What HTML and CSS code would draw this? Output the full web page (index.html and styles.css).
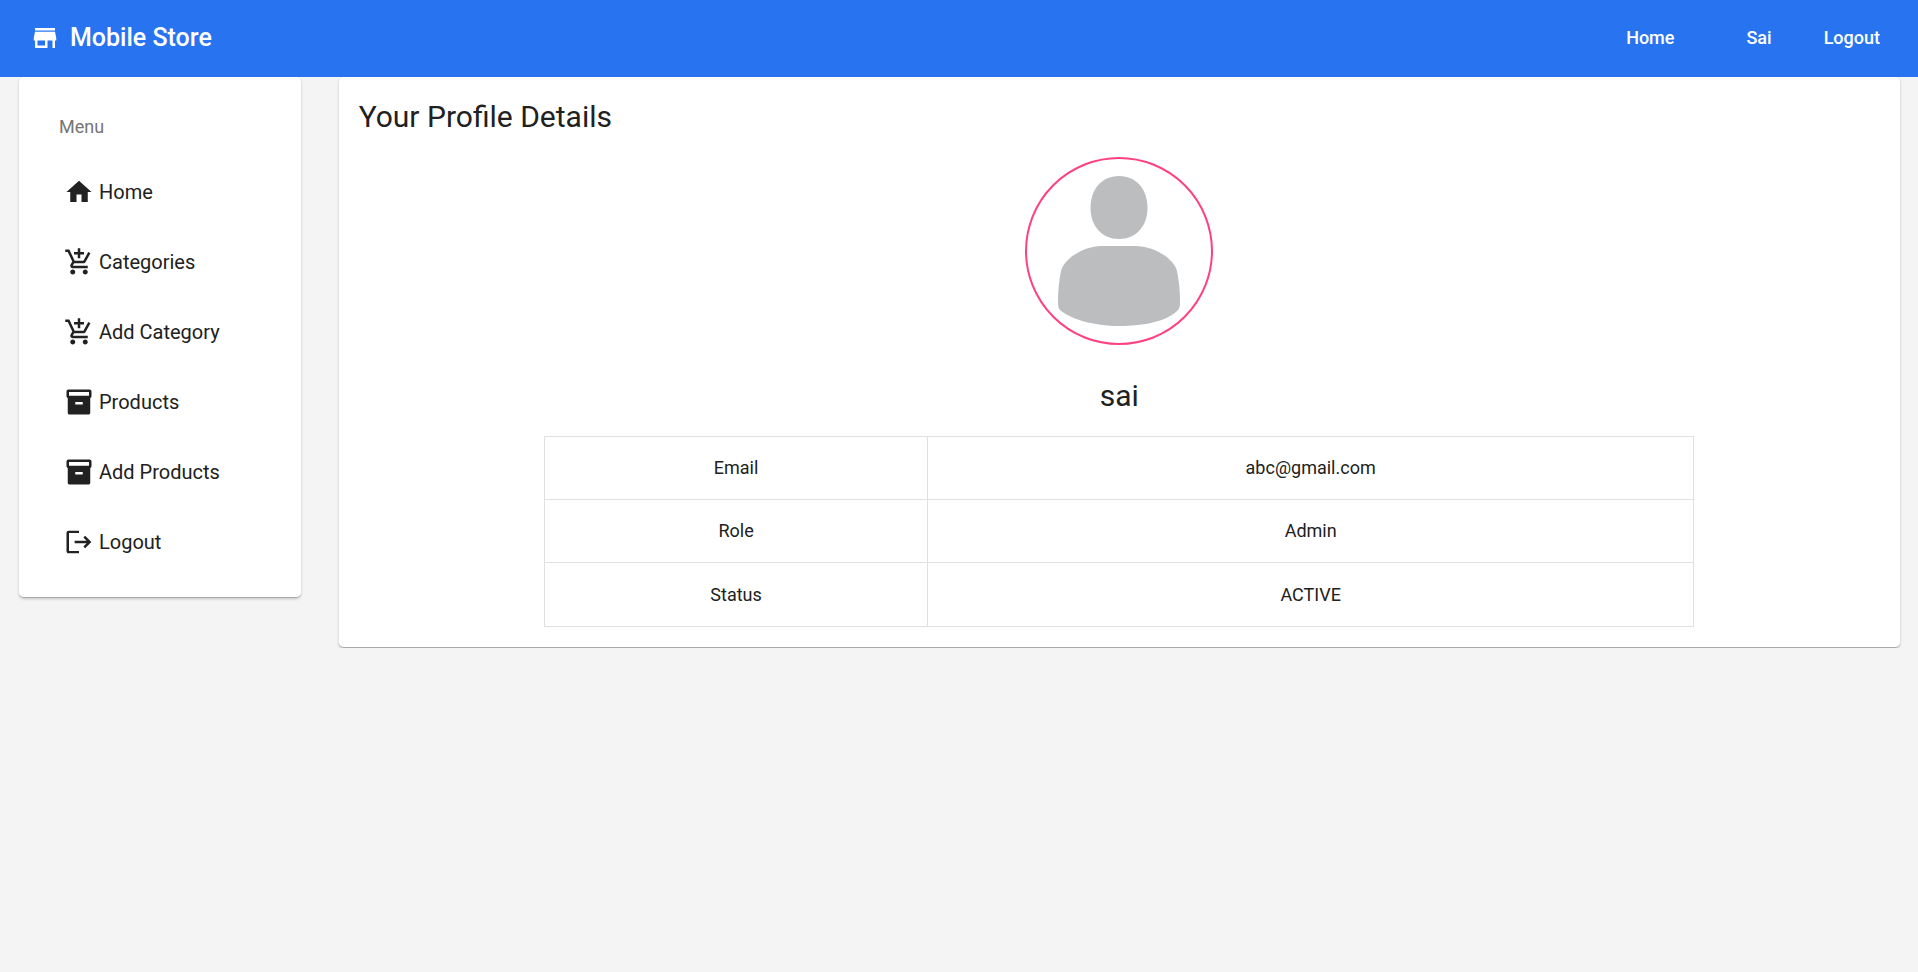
FILE: index.html
```html
<!DOCTYPE html>
<html lang="en">
<head>
<meta charset="utf-8">
<title>Mobile Store</title>
<link rel="stylesheet" href="styles.css">
</head>
<body>
<svg class="sprite" aria-hidden="true">
  <symbol id="store" viewBox="0 0 24 24"><path d="M20 4H4v2h16V4zm1 10v-2l-1-5H4l-1 5v2h1v6h10v-6h4v6h2v-6h1zm-9 4H6v-4h6v4z"/></symbol>
  <symbol id="home" viewBox="0 0 24 24"><path d="M10 20v-6h4v6h5v-8h3L12 3 2 12h3v8z"/></symbol>
  <symbol id="cart" viewBox="0 0 24 24"><path d="M11 9h2V6h3V4h-3V1h-2v3H8v2h3v3zm-4 9c-1.100 0-1.990.9-1.990 2S5.900 22 7 22s2-.9 2-2-.9-2-2-2zm10 0c-1.100 0-1.990.9-1.990 2s.89 2 1.990 2 2-.9 2-2-.9-2-2-2zm-8.900-5h7.450c.75 0 1.410-.41 1.750-1.030L21.160 4.960 19.420 4l-3.870 7H8.530L4.270 2H1v2h2l3.600 7.590-1.350 2.440C4.520 15.370 5.480 17 7 17h12v-2H7l1.100-2z"/></symbol>
  <symbol id="box" viewBox="0 0 24 24"><path d="M20.500 2h-17C2.700 2 2 2.700 2 3.500v3.800c0 .6.400 1.100 1 1.400V20.500c0 .8.700 1.500 1.500 1.500h15c.8 0 1.500-.7 1.500-1.500V8.700c.6-.3 1-.8 1-1.400V3.500c0-.8-.7-1.500-1.500-1.500zM15 14H9v-2h6v2zm5-7H4V4h16v3z"/></symbol>
  <symbol id="exit" viewBox="0 0 24 24"><path d="M4 4.800h8V3H3.700C2.700 3 2 3.700 2 4.700v14.600c0 1 .7 1.700 1.700 1.700H12v-1.800H4V4.800zm17.900 7.200l-5-5-1.400 1.400 2.600 2.600H8.500v2h9.600l-2.600 2.600 1.400 1.400z"/></symbol>
</svg>
<header class="topbar">
  <a class="brand" href="#"><svg class="icon"><use href="#store"/></svg>Mobile Store</a>
  <nav class="topnav">
    <a class="toplink" href="#">Home</a>
    <a class="toplink" href="#">Sai</a>
    <button class="toplink" type="button">Logout</button>
  </nav>
</header>
<div class="layout">
  <aside class="side">
    <nav class="card menu" aria-label="Menu">
      <p class="menu-title">Menu</p>
      <a class="item" href="#"><svg class="icon"><use href="#home"/></svg>Home</a>
      <a class="item" href="#"><svg class="icon"><use href="#cart"/></svg>Categories</a>
      <a class="item" href="#"><svg class="icon"><use href="#cart"/></svg>Add Category</a>
      <a class="item" href="#"><svg class="icon"><use href="#box"/></svg>Products</a>
      <a class="item" href="#"><svg class="icon"><use href="#box"/></svg>Add Products</a>
      <a class="item" href="#"><svg class="icon"><use href="#exit"/></svg>Logout</a>
    </nav>
  </aside>
  <main class="content">
    <section class="card profile">
      <h1 class="heading">Your Profile Details</h1>
      <svg class="avatar" viewBox="0 0 188 188" role="img" aria-label="Profile picture">
        <circle class="ring" cx="94" cy="94" r="93"/>
        <path class="person" d="M94 19C112 19 122.500 33 122.500 51C122.500 69 111 82 94 82C77 82 65.500 69 65.500 51C65.500 33 76 19 94 19Z"/>
        <path class="person" d="M77 89H110C130 89 149 102 152 114C154 124 155 134 155 143C155 149 155 151 152 154C142 164 119 169 94 169C69 169 45 162 35 153C33 151 33 148 33 143C33 134 34 124 36 114C39 102 58 89 77 89Z"/>
      </svg>
      <h2 class="heading name">sai</h2>
      <table class="details">
        <tbody>
          <tr><th scope="row">Email</th><td>abc@gmail.com</td></tr>
          <tr><th scope="row">Role</th><td>Admin</td></tr>
          <tr><th scope="row">Status</th><td>ACTIVE</td></tr>
        </tbody>
      </table>
    </section>
  </main>
</div>
</body>
</html>
```
FILE: styles.css
```css
* { box-sizing: border-box; }

body {
  margin: 0;
  background: #f4f4f4;
  color: #212121;
  font-family: Roboto, sans-serif;
}

a { color: inherit; text-decoration: none; }

.sprite { position: absolute; width: 0; height: 0; }

.icon { width: 30px; height: 30px; fill: currentColor; flex: none; }

.topbar {
  display: flex;
  align-items: center;
  justify-content: space-between;
  height: 77px;
  padding: 0 38px 2px 30px;
  background: #2874f0;
  color: #fff;
}

.brand {
  display: flex;
  align-items: center;
  gap: 10px;
  font-size: 25px;
  font-weight: 500;
}

.topnav { display: flex; align-items: center; }

.toplink {
  margin-left: 52px;
  padding: 0;
  border: 0;
  background: none;
  color: inherit;
  font: 500 18px/24px Roboto, sans-serif;
}

.toplink:first-child { margin-right: 20px; }

.layout {
  display: grid;
  grid-template-columns: minmax(0, 1fr) minmax(0, 5fr);
  align-items: start;
}

.side { padding: 0 19px; }

.content { padding: 0 18px 0 19px; }

.card {
  border-bottom: 1px solid #a8a8a8;
  border-radius: 5px;
  background: #fff;
  box-shadow: 0 1px 3px 0 rgba(0, 0, 0, .2);
}

.menu { padding: 20px; }

.menu-title {
  margin: 0;
  padding: 0 20px;
  color: #757575;
  font-size: 18px;
  line-height: 60px;
}

.item {
  display: flex;
  align-items: center;
  gap: 5px;
  height: 70px;
  padding: 0 25px;
  font-size: 20px;
}

.profile {
  display: flex;
  flex-direction: column;
  align-items: center;
  padding: 20px;
}

.heading {
  margin: 0;
  align-self: stretch;
  font-size: 30px;
  font-weight: 400;
  line-height: 40px;
}

.avatar { width: 188px; height: 188px; margin: 20px 0 31px; }

.ring { fill: #fff; stroke: #ff4081; stroke-width: 2; }

.person { fill: #bcbdbf; }

.name { margin-bottom: 20px; text-align: center; }

.details {
  width: 75.6%;
  border-collapse: collapse;
  table-layout: fixed;
  font-size: 18px;
  line-height: 22px;
  text-align: center;
}

.details th,
.details td {
  padding: 20px;
  border: 1px solid #e0e0e0;
  font-weight: 400;
}

.details tr:last-child > * { padding-top: 21px; }

.details th { width: 33.3%; }
```
